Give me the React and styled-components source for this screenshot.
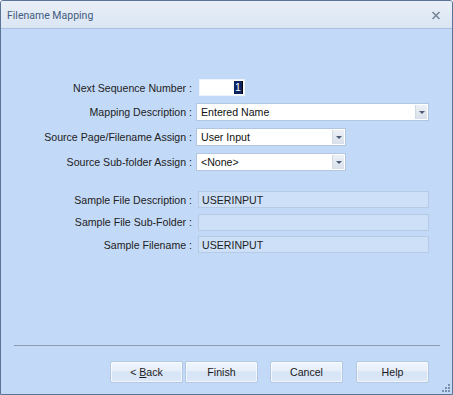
import React from 'react';
import styled, { createGlobalStyle } from 'styled-components';

const Global = createGlobalStyle`
  html, body { margin: 0; padding: 0; background: #ffffff; }
  body { font-family: "Liberation Sans", Arial, sans-serif; font-size: 11px; color: #1a1a1a; }
  * { box-sizing: border-box; }
`;

const Window = styled.div`
  position: relative;
  width: 453px;
  height: 395px;
  border: 1px solid #5a7397;
  border-radius: 3px 3px 0 0;
  background: #c2d9f7;
  display: flex;
  flex-direction: column;
  overflow: hidden;
`;

const TitleBar = styled.div`
  flex: none;
  height: 28px;
  display: flex;
  align-items: center;
  justify-content: space-between;
  padding: 2px 11px 0 6px;
  background: linear-gradient(#e9eff8, #dae5f4);
  border-bottom: 1px solid #a9c0de;
`;

const Title = styled.span`
  font-family: Roboto, "Liberation Sans", sans-serif;
  font-size: 10.5px;
  color: #435b7e;
`;

const CloseIcon = styled.svg`
  width: 10px;
  height: 9px;
  display: block;
`;

const Body = styled.div`
  flex: 1;
  display: flex;
  flex-direction: column;
  padding-top: 50px;
`;

const FormGrid = styled.div`
  display: grid;
  grid-template-columns: 191px auto;
  column-gap: 4px;
  row-gap: ${p => p.$rowGap}px;
  margin-top: ${p => p.$top || 0}px;
  align-items: center;
  justify-items: start;
`;

const Label = styled.label`
  justify-self: end;
  white-space: nowrap;
  color: #222;
  font-size: 10.6px;
`;

const NumberBox = styled.div`
  margin-left: 3px;
  width: 46px;
  height: 17px;
  background: #ffffff;
  border: 1px solid #eef4fc;
  display: flex;
  align-items: center;
  justify-content: flex-end;
  padding-right: 1px;
`;

const Selected = styled.span`
  background: #0b2461;
  color: #ffffff;
  line-height: 13px;
  font-size: 10.6px;
  padding: 0 1px;
  border-right: 1px solid #000;
`;

const Combo = styled.div`
  width: ${p => p.$width}px;
  height: 18px;
  background: #ffffff;
  border: 1px solid #b3c6df;
  display: flex;
  align-items: stretch;
`;

const ComboText = styled.span`
  flex: 1;
  padding-left: 4px;
  display: flex;
  align-items: center;
  color: #111;
  font-size: 10.6px;
`;

const DropButton = styled.span`
  width: 12px;
  flex: none;
  margin: 1px;
  background: linear-gradient(#edf1f6, #d9e0ea);
  border-left: 1px solid #d0dae6;
  display: flex;
  align-items: center;
  justify-content: center;
`;

const Arrow = styled.span`
  width: 0;
  height: 0;
  border-left: 3px solid transparent;
  border-right: 3px solid transparent;
  border-top: 3px solid #4b5c74;
`;

const ReadOnlyBox = styled.div`
  margin-left: 2px;
  width: 231px;
  height: 17px;
  background: #cde0f8;
  border: 1px solid #b6cae4;
  display: flex;
  align-items: center;
  padding-left: 3px;
  color: #222;
  font-size: 10.6px;
`;

const Spacer = styled.div`
  flex: 1;
`;

const Separator = styled.div`
  margin: 0 12px 0 13px;
  height: 1px;
  background: #8d9cb1;
`;

const ButtonRow = styled.div`
  display: flex;
  justify-content: flex-end;
  padding: 15px 23px 11px 0;
`;

const Button = styled.button`
  width: 73px;
  height: 22px;
  margin-left: ${p => p.$gap || 0}px;
  padding: 0;
  font-family: "Liberation Sans", Arial, sans-serif;
  font-size: 10.6px;
  color: #1a1a1a;
  border: 1px solid #b5c8e1;
  border-radius: 2px;
  background: linear-gradient(#f1f6fd 0%, #e6eefa 45%, #d6e4f6 50%, #dde8f7 100%);
  box-shadow: inset 0 0 0 1px rgba(255, 255, 255, 0.6);
`;

const Grip = styled.svg`
  position: absolute;
  right: 2px;
  bottom: 2px;
  width: 10px;
  height: 10px;
`;

function ComboField({ width, value }) {
  return (
    <Combo $width={width}>
      <ComboText>{value}</ComboText>
      <DropButton><Arrow /></DropButton>
    </Combo>
  );
}

export default function App() {
  return (
    <>
      <Global />
      <Window>
        <TitleBar>
          <Title>Filename Mapping</Title>
          <CloseIcon viewBox="0 0 10 9">
            <path d="M1.5 1 L8.5 8 M8.5 1 L1.5 8" stroke="#7a889c" strokeWidth="1.7" />
          </CloseIcon>
        </TitleBar>
        <Body>
          <FormGrid $rowGap={7}>
            <Label>Next Sequence Number :</Label>
            <NumberBox><Selected>1</Selected></NumberBox>
            <Label>Mapping Description :</Label>
            <ComboField width={233} value="Entered Name" />
            <Label>Source Page/Filename Assign :</Label>
            <ComboField width={150} value="User Input" />
            <Label>Source Sub-folder Assign :</Label>
            <ComboField width={150} value="<None>" />
          </FormGrid>
          <FormGrid $rowGap={5.5} $top={20}>
            <Label>Sample File Description :</Label>
            <ReadOnlyBox>USERINPUT</ReadOnlyBox>
            <Label>Sample File Sub-Folder :</Label>
            <ReadOnlyBox />
            <Label>Sample Filename :</Label>
            <ReadOnlyBox>USERINPUT</ReadOnlyBox>
          </FormGrid>
          <Spacer />
          <Separator />
          <ButtonRow>
            <Button>&lt; <u>B</u>ack</Button>
            <Button $gap={2}>Finish</Button>
            <Button $gap={12}>Cancel</Button>
            <Button $gap={13}>Help</Button>
          </ButtonRow>
        </Body>
        <Grip viewBox="0 0 10 10">
          <g fill="#7a90ad">
            <rect x="8" y="2" width="2" height="2" />
            <rect x="5" y="5" width="2" height="2" />
            <rect x="8" y="5" width="2" height="2" />
            <rect x="2" y="8" width="2" height="2" />
            <rect x="5" y="8" width="2" height="2" />
            <rect x="8" y="8" width="2" height="2" />
          </g>
        </Grip>
      </Window>
    </>
  );
}
